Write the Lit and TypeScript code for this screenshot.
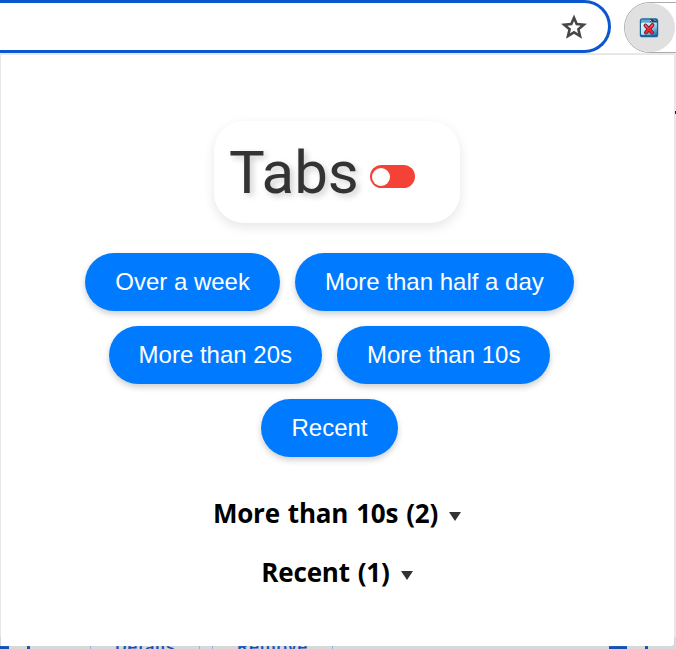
import { LitElement, html, css, svg } from "lit";
import { customElement, property } from "lit/decorators.js";

@customElement("browser-bar")
class BrowserBar extends LitElement {
  static styles = css`
    :host { display: flex; height: 53px; background: #fff; overflow: hidden; gap: 13px; }
    .omnibox {
      box-sizing: border-box; width: 611px; height: 53px; flex: none;
      border: 3px solid #0b57d0; border-left: 0; border-radius: 0 27px 27px 0;
      display: flex; align-items: center; justify-content: flex-end; padding-right: 21px;
    }
    .chip {
      box-sizing: border-box; width: 80px; height: 51px; margin-top: 2px; flex: none;
      border: 1px solid #ababab; border-radius: 26px; background: #fff;
    }
    .round {
      width: 50px; height: 49px; border-radius: 50%; background: #e0e0e0;
      display: flex; align-items: center; justify-content: center;
    }
    .round svg { margin-right: 2px; }
    svg { display: block; }
  `;
  render() {
    return html`
      <div class="omnibox">
        <svg width="26" height="26" viewBox="0 0 26 26">
          <path d="M13 3.8L15.7 10L22.8 10.7L17.4 15.3L19 22.1L13 18.4L7 22.1L8.6 15.3L3.2 10.7L10.3 10Z"
            fill="none" stroke="#474747" stroke-width="2.6" />
        </svg>
      </div>
      <div class="chip">
        <div class="round">
          <svg width="20" height="20" viewBox="0 0 20 20">
            <defs>
              <linearGradient id="pane" x1="0" y1="0" x2="1" y2="1">
                <stop offset="0" stop-color="#f4fbff" />
                <stop offset=".5" stop-color="#b5e0f5" />
                <stop offset="1" stop-color="#1169ad" />
              </linearGradient>
            </defs>
            <rect x=".8" y=".3" width="18.4" height="19" rx="2.6" fill="#1b6696" />
            <path d="M2 2.5Q2 1.5 3 1.5H11V4.5H2Z" fill="#5aa8d2" />
            <path d="M11 1.5H17V4.5H11Z" fill="#1b405d" />
            <path d="M11 2l1.5 1.5M15 1.5l1.5 1.5" stroke="#c9e3ef" stroke-width="1" />
            <rect x="2" y="4.5" width="16" height="12.5" rx="1.3" fill="url(#pane)" />
            <path d="M6.5 7.5L13 14.5M13.5 7L7 14.5" stroke="#3b1731" stroke-width="3.8" stroke-linecap="round" />
            <path d="M6.5 7.5L13 14.5M13.5 7L7 14.5" stroke="#ef2631" stroke-width="2.6" stroke-linecap="round" />
            <path d="M6.5 7L8 9M13.3 7L12 9" stroke="#ff8080" stroke-width=".9" stroke-linecap="round" />
          </svg>
        </div>
      </div>
    `;
  }
}

@customElement("tab-group")
class TabGroup extends LitElement {
  @property() label = "";
  @property({ type: Number }) count = 0;
  static styles = css`
    :host { display: flex; justify-content: center; align-items: center; height: 36px; gap: 11px; }
    .label { font: 700 26px/36px "Open Sans", "Noto Sans", sans-serif; color: #000; white-space: pre; letter-spacing: -0.2px; word-spacing: 1.4px; }
    .arrow { width: 12px; height: 9px; margin-top: 6px; display: block; }
  `;
  render() {
    return html`<span class="label">${this.label} (${this.count})</span>
      <svg class="arrow" viewBox="0 0 12 9">${svg`<path d="M0 0H12L6 9Z" fill="#333" />`}</svg>`;
  }
}

@customElement("app-root")
class AppRoot extends LitElement {
  static styles = css`
    :host { display: block; position: relative; width: 676px; height: 649px; overflow: hidden; background: #fff; }
    .page { position: absolute; left: 0; top: 53px; width: 676px; height: 596px; background: #e9e9e9; overflow: hidden; }
    .foot { position: absolute; left: 0; right: 0; bottom: 0; height: 12px; background: #d9d9d9; overflow: hidden; }
    .foot span { position: absolute; top: 0; font: 500 18px/20px Roboto, sans-serif; color: #1550b8; }
    .details { left: 115px; letter-spacing: 0.75px; }
    .remove { left: 237px; letter-spacing: 1px; }
    .foot i { position: absolute; bottom: 0; height: 3px; background: #1550b8; }
    .foot .rule { background: #94b3df; width: 1px; }
    .mark { position: absolute; left: 675px; top: 58px; width: 1px; height: 3px; background: #222; }
    .popup {
      position: absolute; left: 1px; top: 55px; width: 673px; height: 591px; box-sizing: border-box;
      background: #fff; border-radius: 0 0 3px 0; padding-top: 66px; box-shadow: 0 0 1px #c6c6c6;
    }
    .card {
      box-sizing: border-box; width: 246px; height: 102px; margin: 0 0 0 213px; padding-left: 15px;
      border-radius: 30px; background: #fff; box-shadow: 0 4px 12px rgba(0, 0, 0, 0.1);
      display: flex; align-items: center; gap: 11px;
    }
    .title { font: 400 60px/70px Roboto, sans-serif; color: #333; text-shadow: 3px 3px 6px rgba(0, 0, 0, 0.2); padding-top: 1px; }
    .switch { width: 45px; height: 23px; border-radius: 12px; background: #f44336; margin-top: 9px; display: flex; align-items: center; }
    .knob { width: 18px; height: 18px; margin-left: 2px; border-radius: 50%; background: #fff; }
    .filters { display: flex; flex-wrap: wrap; justify-content: center; gap: 15px; margin: 30px 96px 0 80px; }
    .filter {
      box-sizing: border-box; height: 58px; padding: 0 30px; border: 0; border-radius: 29px; background: #007bff; color: #fff;
      font: 24px/58px "Liberation Sans", Arial, sans-serif; white-space: nowrap; box-shadow: 0 3px 6px rgba(0, 0, 0, 0.2);
    }
    .groups { display: flex; flex-direction: column; gap: 23px; margin: 38px 1px 0 0; }
  `;
  render() {
    const filters = ["Over a week", "More than half a day", "More than 20s", "More than 10s", "Recent"];
    const rules = [90, 199, 212, 332];
    return html`
      <browser-bar></browser-bar>
      <div class="page">
        <div class="mark"></div>
        <div class="foot">
          <i style="left:0;width:9px"></i><i style="left:27px;width:3px"></i>
          ${rules.map((x) => html`<i class="rule" style="left:${x}px"></i>`)}
          <span class="details">Details</span><span class="remove">Remove</span>
          <i style="left:609px;width:18px"></i><i style="left:645px;width:3px"></i>
        </div>
      </div>
      <div class="popup">
        <div class="card">
          <span class="title">Tabs</span>
          <div class="switch"><div class="knob"></div></div>
        </div>
        <div class="filters">${filters.map((f) => html`<button class="filter">${f}</button>`)}</div>
        <div class="groups">
          <tab-group label="More than 10s" count="2"></tab-group>
          <tab-group label="Recent" count="1"></tab-group>
        </div>
      </div>
    `;
  }
}
